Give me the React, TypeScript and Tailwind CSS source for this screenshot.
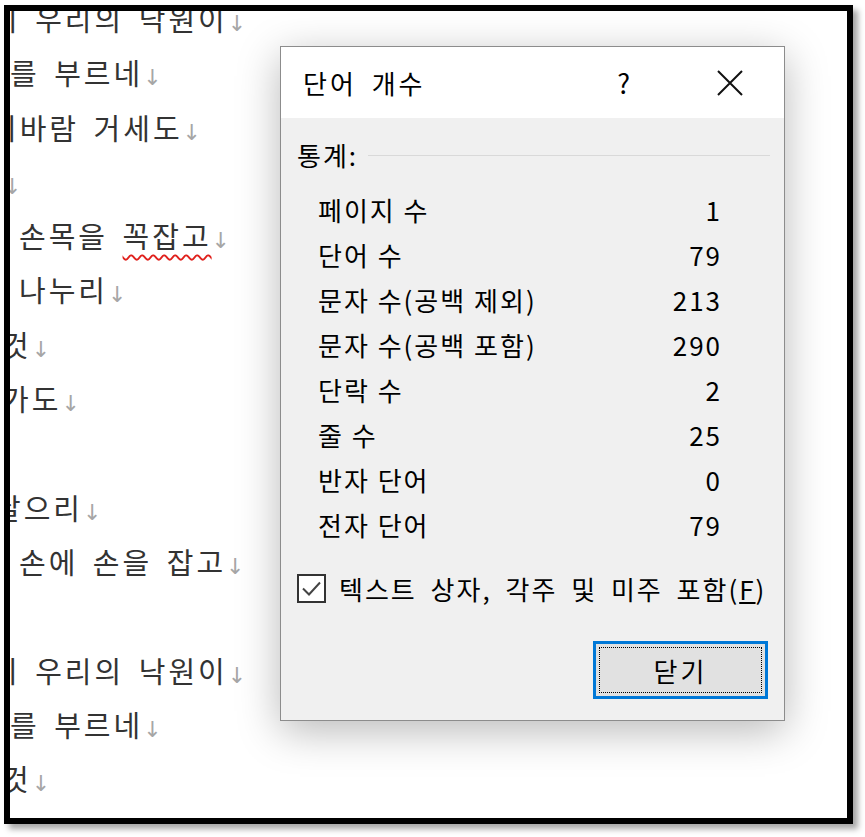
import { ReactNode } from 'react';

const KR = "font-['Noto_Sans_CJK_KR','Noto_Sans',sans-serif]";

// visible part of the document behind the dialog
const lines: { text: ReactNode; shift: string }[] = [
  { text: '이 우리의 낙원이', shift: '-ml-[19px]' },
  { text: '를 부르네', shift: 'ml-0' },
  { text: '비바람 거세도', shift: '-ml-[20px]' },
  { text: '', shift: '-ml-[7px]' },
  {
    text: (
      <>
        손목을{' '}
        <span className="underline decoration-wavy decoration-[#e0201c] decoration-[1.5px] underline-offset-[6px]">꼭잡고</span>
      </>
    ),
    shift: 'ml-[9px]',
  },
  { text: '나누리', shift: 'ml-[9px]' },
  { text: '것', shift: '-ml-[8px]' },
  { text: '가도', shift: '-ml-[8px]' },
  { text: null, shift: 'ml-0' },
  { text: '날으리', shift: '-ml-[16px]' },
  { text: '손에 손을 잡고', shift: 'ml-[9px]' },
  { text: null, shift: 'ml-0' },
  { text: '이 우리의 낙원이', shift: '-ml-[19px]' },
  { text: '를 부르네', shift: 'ml-0' },
  { text: '것', shift: '-ml-[8px]' },
];

const stats = [
  ['페이지 수', '1'],
  ['단어 수', '79'],
  ['문자 수(공백 제외)', '213'],
  ['문자 수(공백 포함)', '290'],
  ['단락 수', '2'],
  ['줄 수', '25'],
  ['반자 단어', '0'],
  ['전자 단어', '79'],
];

function WordCountDialog() {
  return (
    <div className="absolute left-[270px] top-[35px] w-[505px] h-[675px] flex flex-col border border-[#8c8c8c] bg-[#f0f0f0] shadow-[0_10px_40px_rgba(0,0,0,0.28)] text-black tracking-[2px]">
      <div className="h-[71px] shrink-0 bg-white flex items-center">
        <span className="pl-[22px] text-[26px] leading-none tracking-[3px] [word-spacing:6px]">단어 개수</span>
        <span className="ml-auto mr-[85px] text-[27px] leading-none">?</span>
        <svg width="26" height="26" viewBox="0 0 26 26" className="mr-[41px]">
          <path d="M1 1L25 25M25 1L1 25" stroke="#111" strokeWidth="2" />
        </svg>
      </div>

      <div className="flex items-center mt-[19px] pl-[16px] pr-[14px] h-[36px]">
        <span className="text-[26px] leading-none">통계:</span>
        <div className="flex-1 ml-[10px] h-px bg-[#d9d9d9]" />
      </div>

      <div className="flex flex-col mt-[14px] ml-[37px] w-[404px]">
        {stats.map(([label, value]) => (
          <div key={label} className="flex justify-between h-[45px] items-center text-[26px]">
            <span>{label}</span>
            <span>{value}</span>
          </div>
        ))}
      </div>

      <div className="flex items-center mt-[23px] ml-[16px] h-[36px]">
        <div className="w-[29px] h-[29px] border-2 border-[#333] bg-white flex items-center justify-center">
          <svg width="21" height="17" viewBox="0 0 21 17">
            <path d="M2 8.5L8 14.5L19 2.5" fill="none" stroke="#444" strokeWidth="2" />
          </svg>
        </div>
        <span className="ml-[13px] text-[26px] [word-spacing:6px] whitespace-nowrap">
          텍스트 상자, 각주 및 미주 포함(<span className="underline underline-offset-2">F</span>)
        </span>
      </div>

      <div className="flex justify-end mt-[35px] mr-[16px]">
        <button className="w-[175px] h-[58px] border-[3px] border-[#0078d7] bg-[#e1e1e1] p-[3px]">
          <div className="w-full h-full border border-dotted border-black flex items-center justify-center text-[26px] tracking-[3px]">
            닫기
          </div>
        </button>
      </div>
    </div>
  );
}

export default function App() {
  return (
    <div className={`w-[865px] h-[837px] bg-white pl-[4px] pt-[5px] ${KR}`}>
      <div className="relative w-[849px] h-[819px] border-[6px] border-black bg-white overflow-hidden shadow-[5px_5px_6px_rgba(0,0,0,0.35)]">
        <div className="flex flex-col -mt-[20px] text-[29px] leading-[54.3px] text-[#333] tracking-[3px] [word-spacing:5px] whitespace-nowrap">
          {lines.map((l, i) => (
            <div key={i} className={`h-[54.3px] ${l.shift}`}>
              {l.text}
              {l.text !== null && (
                <span className="font-['DejaVu_Sans',sans-serif] text-[22px] text-[#a6a6a6] tracking-normal">↓</span>
              )}
            </div>
          ))}
        </div>
        <WordCountDialog />
      </div>
    </div>
  );
}
